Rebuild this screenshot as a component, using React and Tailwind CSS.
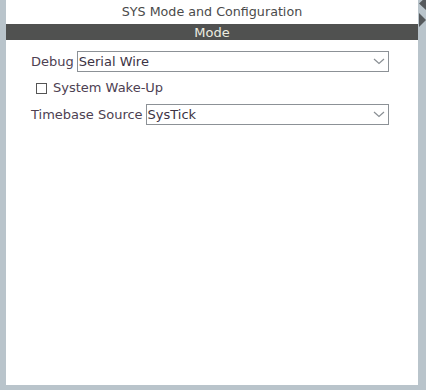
import React from "react";

const font = { fontFamily: '"DejaVu Sans", Verdana, sans-serif' };

function Chevron() {
  return (
    <svg width="12" height="7" viewBox="0 0 12 7" className="shrink-0">
      <path d="M1 1 L6 5.5 L11 1" fill="none" stroke="#8a8f94" strokeWidth="1.2" />
    </svg>
  );
}

function Select({ value }) {
  return (
    <div className="flex-1 h-[21px] border border-[#8c9196] bg-white flex items-center justify-between pl-[1px] pr-[3px]">
      <span className="text-[13px] text-[#3c3344] leading-none">{value}</span>
      <Chevron />
    </div>
  );
}

export default function App() {
  return (
    <div
      className="w-[437px] h-[390px] bg-[#b9c4cb] flex overflow-hidden"
      style={font}
    >
      {/* LEFT GUTTER */}
      <div className="w-[6px] shrink-0" />

      {/* MAIN PANEL */}
      <div className="w-[412px] h-[385px] bg-white flex flex-col shrink-0">
        <div className="h-[24px] flex items-center justify-center text-[12.7px] text-[#4a4a4a]">
          SYS Mode and Configuration
        </div>
        <div className="h-[16px] bg-[#505150] flex items-center justify-center text-[13px] text-[#ecece0] leading-none">
          Mode
        </div>

        <div className="flex flex-col pl-[25px] pr-[29px] pt-[11px] text-[13px] text-[#4d4152]">
          {/* DEBUG */}
          <div className="flex items-center gap-[3px]">
            <span>Debug</span>
            <Select value="Serial Wire" />
          </div>

          {/* WAKE-UP */}
          <div className="flex items-center gap-[6px] pl-[5px] h-[32px]">
            <div className="w-[11px] h-[11px] border border-[#555] bg-white" />
            <span>System Wake-Up</span>
          </div>

          {/* TIMEBASE */}
          <div className="flex items-center gap-[3px]">
            <span>Timebase Source</span>
            <Select value="SysTick" />
          </div>
        </div>
      </div>

      {/* RIGHT STRIP WITH ARROWS */}
      <div className="w-[8px] shrink-0 flex flex-col">
        <svg width="8" height="30" viewBox="0 0 8 30">
          <polygon points="8,-3 8,10 1,3.5" fill="#55595c" />
          <polygon points="1,13 1,27 8,20" fill="#55595c" />
        </svg>
      </div>

      <div className="flex-1 bg-white" />
    </div>
  );
}
